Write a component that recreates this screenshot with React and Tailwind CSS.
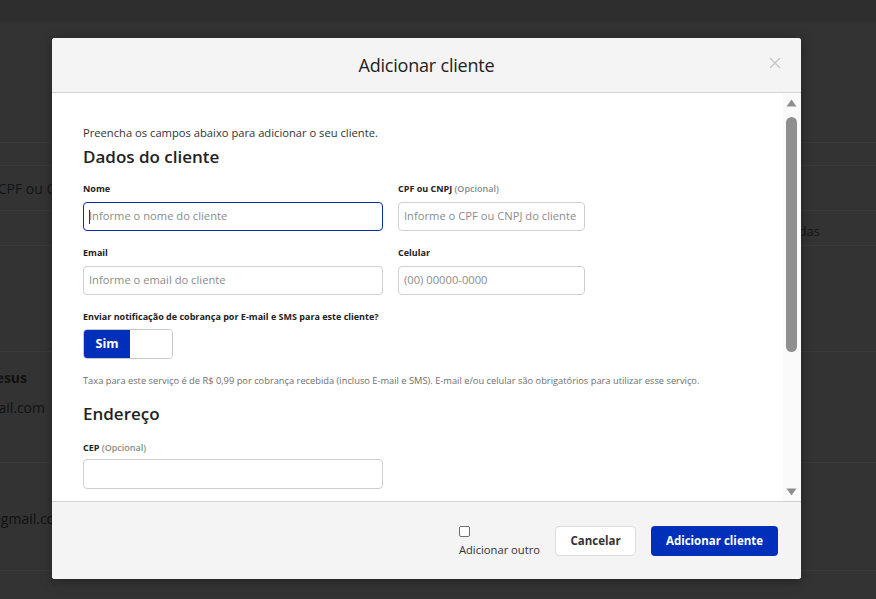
import { useState } from 'react';

const Field = ({ label, optional, placeholder, width, focused }) => (
  <div className={width}>
    <label className="block text-[9px] leading-[14px] font-bold text-[#222] whitespace-nowrap">
      {label}
      {optional && <span className="font-semibold text-[#8a8a8a]"> (Opcional)</span>}
    </label>
    <div
      className={`mt-[6px] h-[29px] rounded-[4px] bg-white flex items-center px-[5px] text-[11.2px] text-[#8c8c8c] whitespace-nowrap overflow-hidden ${
        focused ? 'border-[1.5px] border-[#0a2fa3]' : 'border border-[#cfcfcf]'
      }`}
    >
      {focused && <span className="w-px h-[14px] bg-[#333] mr-[-1px]" />}
      {placeholder}
    </div>
  </div>
);

const App = () => {
  const [notify] = useState(true);

  return (
    <div className="relative w-full h-screen overflow-hidden bg-[#333333] font-['Open_Sans',sans-serif]">
      {/* Dimmed page behind */}
      <div className="h-[22px] bg-[#2e2e2e]" />
      <div className="h-[121px] border-b border-[#3a3a3a]" />
      <div className="h-[22px]" />
      <div className="h-[46px] border-y border-[#3a3a3a] flex items-center text-[14px] text-[#151515]">
        <div className="w-[78px] flex justify-end whitespace-nowrap">CPF ou CNPJ</div>
      </div>
      <div className="h-[35px] border-b border-[#3a3a3a] flex items-end justify-end pr-[56px] pb-[4px] text-[13px] text-[#151515]">
        Cobranças recebidas
      </div>
      <div className="h-[106px] border-b border-[#3a3a3a]" />
      <div className="h-[111px] border-b border-[#3a3a3a] pt-[16px] text-[14px] text-[#111] leading-[20px]">
        <div className="w-[27px] flex justify-end whitespace-nowrap font-bold">Maria de Jesus</div>
        <div className="w-[45px] flex justify-end whitespace-nowrap mt-[10px]">maria.jesus@gmail.com</div>
      </div>
      <div className="h-[108px] border-b border-[#3a3a3a] pt-[45px] text-[14px] text-[#111]">
        <div className="w-[68px] flex justify-end whitespace-nowrap">joao@gmail.com</div>
      </div>

      {/* Modal */}
      <div className="absolute left-[52px] top-[38px] w-[749px] h-[541px] rounded-[3px] bg-white shadow-[0_2px_12px_rgba(0,0,0,0.35)] flex flex-col overflow-hidden">
        <div className="relative h-[55px] shrink-0 bg-[#f4f4f4] border-b border-[#d2d2d2] flex items-center justify-center">
          <h1 className="text-[18px] font-medium text-[#222] tracking-[-0.2px]">Adicionar cliente</h1>
          <button className="absolute right-[20px] top-[19px] text-[#c4c4c4]">
            <svg width="12" height="12" viewBox="0 0 12 12" fill="none" stroke="currentColor" strokeWidth="1.2">
              <path d="M1 1l10 10M11 1L1 11" />
            </svg>
          </button>
        </div>

        <div className="flex flex-1 min-h-0">
          <div className="flex-1 overflow-hidden pl-[31px] pt-[32px] text-[#222]">
            <p className="text-[11.2px] leading-[16px] text-[#333]">
              Preencha os campos abaixo para adicionar o seu cliente.
            </p>
            <h2 className="mt-[4px] text-[17px] leading-[24px] font-semibold text-[#222]">Dados do cliente</h2>

            <div className="mt-[13px] flex gap-[15px]">
              <Field label="Nome" placeholder="Informe o nome do cliente" width="w-[300px]" focused />
              <Field label="CPF ou CNPJ" optional placeholder="Informe o CPF ou CNPJ do cliente" width="w-[187px]" />
            </div>

            <div className="mt-[15px] flex gap-[15px]">
              <Field label="Email" placeholder="Informe o email do cliente" width="w-[300px]" />
              <Field label="Celular" placeholder="(00) 00000-0000" width="w-[187px]" />
            </div>

            <div className="mt-[15px] text-[9px] leading-[14px] font-bold text-[#222]">
              Enviar notificação de cobrança por E-mail e SMS para este cliente?
            </div>
            <div className="mt-[5px] w-[90px] h-[30px] flex rounded-[4px] border border-[#c9c9c9] overflow-hidden">
              <div className="w-[46px] bg-[#0030b9] flex items-center justify-center text-white text-[12.5px] font-bold">
                {notify ? 'Sim' : 'Não'}
              </div>
              <div className="flex-1 bg-white rounded-l-[3px]" />
            </div>

            <p className="mt-[16px] text-[9.3px] leading-[12px] text-[#6e6e6e] whitespace-nowrap">
              Taxa para este serviço é de R$ 0,99 por cobrança recebida (incluso E-mail e SMS). E-mail e/ou celular são obrigatórios para utilizar esse serviço.
            </p>

            <h2 className="mt-[15px] text-[17px] leading-[24px] font-semibold text-[#222]">Endereço</h2>

            <div className="mt-[15px] flex">
              <div className="w-[300px]">
                <label className="block text-[9px] leading-[14px] font-bold text-[#222]">
                  CEP<span className="font-semibold text-[#8a8a8a]"> (Opcional)</span>
                </label>
                <div className="mt-[4px] h-[30px] rounded-[4px] border border-[#cfcfcf] bg-white" />
              </div>
            </div>
          </div>

          {/* Scrollbar */}
          <div className="w-[18px] shrink-0 bg-[#fafafa] flex flex-col items-center pt-[6px] pb-[5px] pr-[1px]">
            <svg width="11" height="8" viewBox="0 0 11 8" className="text-[#8f8f8f]">
              <path d="M5.5 0.5L10.5 7.5H0.5Z" fill="currentColor" />
            </svg>
            <div className="mt-[10px] w-[11px] h-[235px] rounded-full bg-[#8f8f8f]" />
            <div className="flex-1" />
            <svg width="11" height="8" viewBox="0 0 11 8" className="text-[#8f8f8f]">
              <path d="M0.5 0.5H10.5L5.5 7.5Z" fill="currentColor" />
            </svg>
          </div>
        </div>

        <div className="h-[78px] shrink-0 bg-[#f4f4f4] border-t border-[#d2d2d2] flex justify-end items-start pt-[24px] pr-[23px] gap-[15px]">
          <label className="flex flex-col items-start">
            <span className="w-[11px] h-[11px] rounded-[2px] border border-[#6f6f6f] bg-white" />
            <span className="mt-[5px] text-[11.2px] leading-[16px] text-[#333]">Adicionar outro</span>
          </label>
          <button className="w-[81px] h-[30px] rounded-[4px] border border-[#dcdcdc] bg-white text-[11.5px] font-bold text-[#333]">
            Cancelar
          </button>
          <button className="w-[127px] h-[30px] rounded-[4px] bg-[#0030b9] text-[11.5px] font-bold text-white">
            Adicionar cliente
          </button>
        </div>
      </div>
    </div>
  );
};

export default App;
